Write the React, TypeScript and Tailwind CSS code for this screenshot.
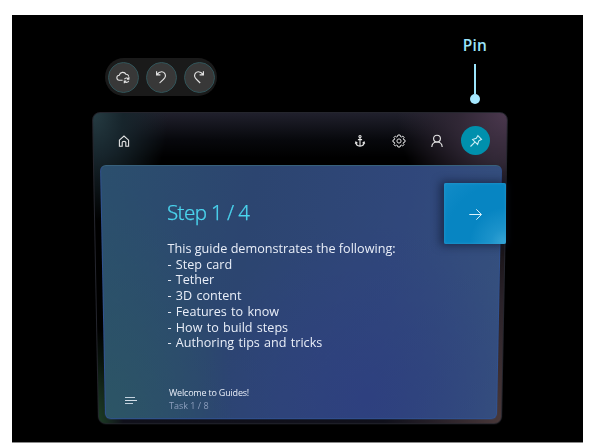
import React from "react";

type IconProps = { size: number; children: React.ReactNode; weight?: number };

function Icon({ size, children, weight = 1 }: IconProps) {
  return (
    <svg
      width={size}
      height={size}
      viewBox={`0 0 ${size} ${size}`}
      fill="none"
      stroke="currentColor"
      strokeWidth={weight}
      className="block shrink-0 overflow-visible"
    >
      {children}
    </svg>
  );
}

const CloudSync = () => (
  <Icon size={14} weight={1.1}>
    <path d="M6.6 10.2H3.4A2.5 2.5 0 0 1 3.3 5.2A3.6 3.6 0 0 1 10 4.3A2.5 2.5 0 0 1 12.7 6.6" />
    <path d="M8.5 9.3A2.3 2.3 0 0 1 12.4 8.8M12.9 7.1V9.3H10.9M12.7 10.8A2.3 2.3 0 0 1 8.8 11.6M8.3 13.2V11H10.3" />
  </Icon>
);

const Undo = () => (
  <Icon size={12} weight={1.15}>
    <path d="M1.6 0.2V3.9H5.4M1.8 3.7C3.1 1.9 4.9 0.7 6.9 0.8C9.9 1 11.4 4.3 9.8 6.8C8.9 8.2 7 9.8 4.6 12" />
  </Icon>
);

const Redo = () => (
  <Icon size={12} weight={1.15}>
    <path d="M10.4 0.2V3.9H6.6M10.2 3.7C8.9 1.9 7.1 0.7 5.1 0.8C2.1 1 0.6 4.3 2.2 6.8C3.1 8.2 5 9.8 7.2 12" />
  </Icon>
);

const Home = () => (
  <Icon size={12} weight={1.1}>
    <path d="M1.4 5.2L6 1L10.6 5.2V11.2H7.8V7.3C7.8 6 4.2 6 4.2 7.3V11.2H1.4Z" />
  </Icon>
);

const Anchor = () => (
  <Icon size={12} weight={1.1}>
    <circle cx="6" cy="1.6" r="1.1" />
    <path d="M6 2.7V11.2M3.9 4.6H8.1M1.9 7C1.8 9.8 3.6 11 6 11.2C8.4 11 10.2 9.8 10.1 7M1.3 8.7L1.9 7L3.4 8.2M10.7 8.7L10.1 7L8.6 8.2" />
  </Icon>
);

const Gear = () => (
  <Icon size={14}>
    <path d="M5.9 1H8.1L8.5 2.6L9.4 3L10.9 2.1L12.1 3.5L11.2 4.8L11.5 5.6L13 6V8L11.5 8.4L11.1 9.2L12 10.6L10.6 12L9.3 11.1L8.4 11.5L8.1 13H5.9L5.5 11.5L4.7 11.1L3.3 12L1.9 10.6L2.8 9.2L2.5 8.4L1 8V6L2.5 5.6L2.8 4.8L1.9 3.5L3.3 2.1L4.6 3L5.5 2.6Z" />
    <circle cx="7" cy="7" r="2.1" />
  </Icon>
);

const Person = () => (
  <Icon size={12} weight={1.15}>
    <circle cx="6" cy="3.6" r="3.4" />
    <path d="M0.8 12C1 9 3 7 6 7C9 7 11 9 11.2 12" />
  </Icon>
);

const Pin = () => (
  <Icon size={12} weight={1.1}>
    <path d="M7.9 0.7L11.5 4.3L10.4 4.9L8.8 5.8L7.6 9.5L2.6 4.6L6.3 3.3L7.2 1.8ZM4.9 7.1L0.5 11.5" />
  </Icon>
);

const Arrow = () => (
  <Icon size={13}>
    <path d="M0.3 6.5H12.3M7.3 1.3L12.4 6.5L7.3 11.7" />
  </Icon>
);

const tools = [CloudSync, Undo, Redo];

const topics = [
  "Step card",
  "Tether",
  "3D content",
  "Features to know",
  "How to build steps",
  "Authoring tips and tricks",
];

function PanelGlass() {
  return (
    <div className="absolute inset-x-0 top-0 h-[323px] origin-top rounded-[8px] border border-[#24252d] bg-[radial-gradient(ellipse_75px_110px_at_0%_0%,#263c43_0%,#17252c_40%,transparent_100%),radial-gradient(ellipse_110px_110px_at_100%_0%,#4b384e_0%,#302735_45%,transparent_100%),radial-gradient(ellipse_25px_100px_at_0%_100%,#1c3c24_0%,transparent_100%),radial-gradient(ellipse_120px_260px_at_100%_100%,#493839_0%,#2a2229_50%,transparent_100%),linear-gradient(180deg,#20202c_0px,#07080c_27px,#000_45px,#000_80%,#11111b_100%)] [transform:perspective(1000px)_rotateX(-5.3deg)]" />
  );
}

function CardGlass() {
  return (
    <div className="absolute inset-x-0 top-0 h-[262px] origin-top rounded-[6px] border border-[#305292] border-t-[#38617c] bg-[radial-gradient(ellipse_130px_240px_at_0%_100%,#2c5565_0%,transparent_100%),radial-gradient(ellipse_170px_180px_at_67%_92%,#2e407f_0%,transparent_100%),linear-gradient(100deg,#2b4f6d_0%,#2c4570_35%,#30477b_70%,#36517e_100%)] [transform:perspective(1000px)_rotateX(-5.63deg)]" />
  );
}

export default function App() {
  return (
    <div className="h-[448px] w-[591px] overflow-hidden bg-white pt-[15px] pl-[12px] font-['Open_Sans','Noto_Sans',sans-serif]">
      <main className="h-[428px] w-[571px] border-b border-[#8a8a8a] bg-black pl-[80px]">
        <header className="flex h-[97px] w-[416px] items-start justify-between">
          <div className="mt-[43px] ml-[13px] flex h-[38px] w-[112px] items-center justify-center gap-[7px] rounded-full bg-[#1a1a1a]">
            {tools.map((Tool, i) => (
              <button
                key={i}
                className="flex size-[31px] items-center justify-center rounded-full border border-[#315459] bg-[#383838] text-[#e4e4e4]"
              >
                <Tool />
              </button>
            ))}
          </div>
          <div className="mt-[19px] mr-[20px] flex w-[26px] flex-col items-center text-[#9be4fb]">
            <span className="text-[15.5px] leading-[22px] font-semibold tracking-[0.2px]">Pin</span>
            <span className="mt-[8px] h-[30px] w-[2px] bg-[#9be4fb]" />
            <span className="size-[10px] rounded-full bg-[#a5e8ff]" />
          </div>
        </header>

        <section className="relative h-[312px] w-[416px]">
          <PanelGlass />
          <div className="relative flex h-[53px] items-center pt-[4px] pl-[26px] text-[#e5e5e5]">
            <Home />
            <nav className="ml-auto flex items-center pr-[18px]">
              <Anchor />
              <span className="ml-[26px]"><Gear /></span>
              <span className="ml-[25px]"><Person /></span>
              <button className="ml-[18px] flex size-[29px] items-center justify-center rounded-full bg-[#0090ad] text-[#c8edf5]">
                <Pin />
              </button>
            </nav>
          </div>

          <div className="relative ml-[8px] h-[254px] w-[402px]">
            <CardGlass />
            <div className="relative flex h-full flex-col">
              <div className="flex h-[212px] justify-between pl-[67px]">
                <article className="pt-[33px] whitespace-nowrap text-[#e9eef8]">
                  <h1 className="font-['Noto_Sans','Open_Sans',sans-serif] text-[20.5px] leading-[28px] font-light tracking-[-0.6px] text-[#4bd6ef] [-webkit-text-stroke:0.25px_#4bd6ef]">
                    Step 1 / 4
                  </h1>
                  <p className="mt-[15px] ml-[0.5px] text-[12.65px] leading-[15.7px]">
                    This guide demonstrates the following:
                  </p>
                  <ul className="ml-[0.5px] text-[12.6px] leading-[15.7px] [word-spacing:1px]">
                    {topics.map((topic) => (
                      <li key={topic}>{`- ${topic}`}</li>
                    ))}
                  </ul>
                </article>
                <button className="mt-[18px] mr-[-4px] flex h-[61px] w-[62px] shrink-0 items-center justify-center rounded-[2px] bg-[radial-gradient(circle_at_100%_100%,#3ba7d6_0%,#1c93cb_18%,#0785c2_42%,#0785c2_70%,#128cc8_100%)] pt-px pl-px text-[#dff3fb] shadow-[-2px_0_9px_2px_rgba(14,24,48,0.6),inset_0_0_3px_#2b9bd0]">
                  <Arrow />
                </button>
              </div>
              <footer className="flex items-start pt-[10px] pl-[25px]">
                <div className="mt-[10px] flex w-[12px] flex-col gap-[2px]">
                  <span className="h-px w-[10px] bg-[#c3d2de]" />
                  <span className="h-px w-[12px] bg-[#d3dee8]" />
                  <span className="h-px w-[8px] bg-[#c3d2de]" />
                </div>
                <div className="ml-[32px] text-[9px] leading-[12.7px] whitespace-nowrap">
                  <div className="font-medium tracking-[-0.2px] text-[#e9eef8]">Welcome to Guides!</div>
                  <div className="text-[#8d9fbd]">Task 1 / 8</div>
                </div>
              </footer>
            </div>
          </div>
        </section>
      </main>
    </div>
  );
}
